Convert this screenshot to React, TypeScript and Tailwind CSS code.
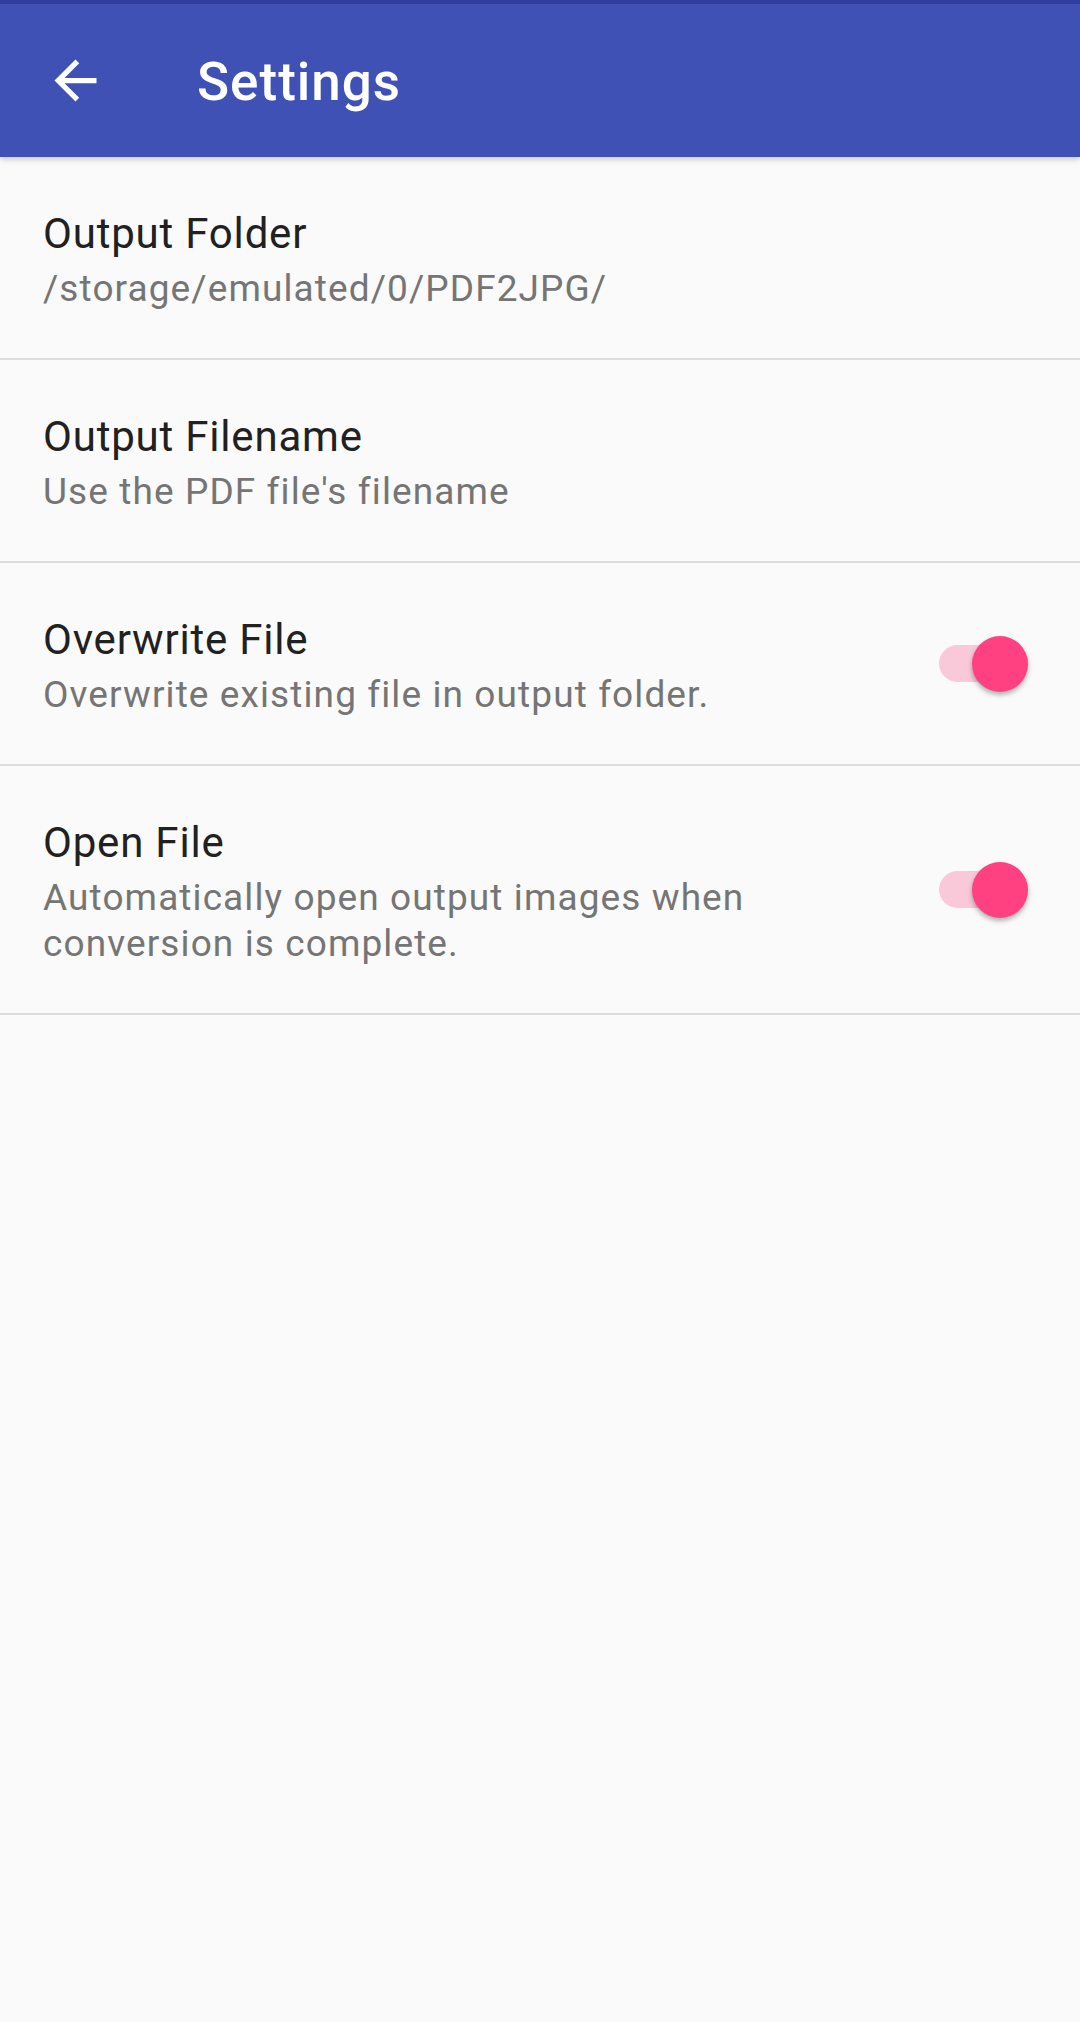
import { useState } from 'react';

interface SettingRowProps {
    title: string;
    summary: string;
    toggle?: boolean;
}

function Toggle({ on, onChange }: { on: boolean; onChange: () => void }) {
    return (
        <button
            type="button"
            onClick={onChange}
            className="relative flex items-center w-[89px] h-[56px] shrink-0"
        >
            <span className={`block w-full h-[37px] rounded-full ${on ? 'bg-[#f9c9da]' : 'bg-[#b9b9b9]'}`} />
            <span
                className={`absolute top-0 w-[56px] h-[56px] rounded-full shadow-[0_3px_5px_rgba(0,0,0,0.3)] ${
                    on ? 'right-0 bg-[#ff4081]' : 'left-0 bg-[#ececec]'
                }`}
            />
        </button>
    );
}

function SettingRow({ title, summary, toggle }: SettingRowProps) {
    const [on, setOn] = useState(true);

    return (
        <div className="flex items-center pl-[43px] pr-[52px] border-b-2 border-[#dddddd]">
            <div className="flex-1 pt-[49px] pb-[46px] pr-[120px]">
                <div className="text-[42px] leading-[56px] tracking-[0.8px] text-[#212121]">{title}</div>
                <div className="mt-[4px] text-[37px] leading-[46px] tracking-[1.1px] text-[#757575]">{summary}</div>
            </div>
            {toggle && <Toggle on={on} onChange={() => setOn(!on)} />}
        </div>
    );
}

export default function App() {
    return (
        <div className="min-h-[2022px] bg-[#fafafa] font-['Roboto',sans-serif]">
            {/* App Bar */}
            <header className="relative z-10 bg-[#3f51b5] border-t-4 border-[#303f9f] shadow-[0_2px_6px_rgba(0,0,0,0.22)]">
                <div className="flex items-center h-[153px]">
                    <button type="button" className="ml-[44px] w-[63px] h-[63px] flex items-center justify-center text-white">
                        <svg viewBox="0 0 24 24" className="w-[63px] h-[63px]" fill="currentColor">
                            <path d="M20 11H7.83l5.59-5.59L12 4l-8 8 8 8 1.41-1.41L7.83 13H20v-2z" />
                        </svg>
                    </button>
                    <h1 className="ml-[90px] mt-[4px] text-[53px] font-medium tracking-[1px] text-white leading-none">Settings</h1>
                </div>
            </header>

            {/* Preferences */}
            <div>
                <SettingRow title="Output Folder" summary="/storage/emulated/0/PDF2JPG/" />
                <SettingRow title="Output Filename" summary="Use the PDF file's filename" />
                <SettingRow title="Overwrite File" summary="Overwrite existing file in output folder." toggle />
                <SettingRow
                    title="Open File"
                    summary="Automatically open output images when conversion is complete."
                    toggle
                />
            </div>
        </div>
    );
}
